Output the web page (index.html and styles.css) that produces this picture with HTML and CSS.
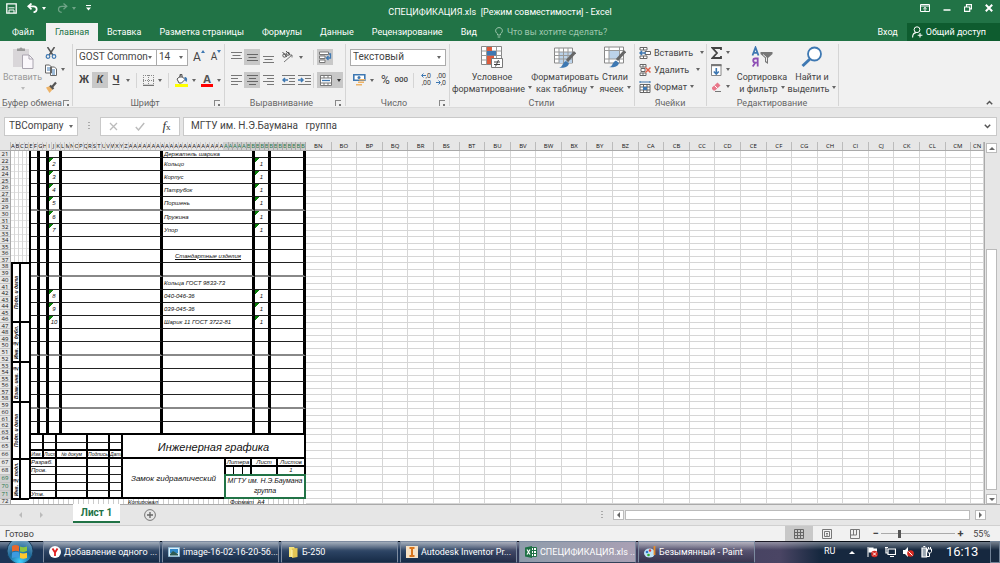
FILE: index.html
```html
<!DOCTYPE html>
<html lang="ru">
<head>
<meta charset="utf-8">
<title>СПЕЦИФИКАЦИЯ.xls [Режим совместимости] - Excel</title>
<link rel="stylesheet" href="styles.css">
</head>
<body>
<header class="titlebar">
  <div class="quick">
    <button class="tb" aria-label="Сохранить"><svg width="11" height="11" viewBox="0 0 11 11"><path d="M.8.8h9.400v9.400H.8z" fill="none" stroke="#fff" stroke-width="1.300"/><path d="M2.500 4.800h6M3 10V7h5v3" fill="none" stroke="#fff"/></svg></button>
    <button class="tb undo" aria-label="Отменить"><svg width="11" height="10" viewBox="0 0 11 10"><path d="M4.500.5 1.200 3.300l3.300 3M1.500 3.300h4.800c4.400 0 4.600 5.500.2 6" fill="none" stroke="#fff" stroke-width="1.700"/></svg><i class="car w"></i></button>
    <button class="tb redo" aria-label="Вернуть"><svg width="11" height="10" viewBox="0 0 11 10"><path d="M6.500.5l3.300 2.800-3.300 3M9.500 3.300H5C.5 3.300.3 8.800 4.700 9.300" fill="none" stroke="#fff" stroke-width="1.300"/></svg><i class="car w"></i></button>
    <button class="tb more" aria-label="Настройка панели"><svg width="5" height="6" viewBox="0 0 5 6"><path d="M0 .5h5" stroke="#fff"/><path d="M0 2.500h5L2.500 5.500z" fill="#fff"/></svg></button>
  </div>
  <div class="doc-title">СПЕЦИФИКАЦИЯ.xls&nbsp; [Режим совместимости] - Excel</div>
  <div class="win">
    <button class="tb" aria-label="Параметры ленты"><svg width="10" height="8" viewBox="0 0 10 8"><path d="M.5.5h9v7h-9zM.5 2h9M5 7V3.500M3.300 5 5 3.400 6.700 5" fill="none" stroke="#fff"/></svg></button>
    <button class="tb" aria-label="Свернуть"><svg width="8" height="8" viewBox="0 0 8 8"><path d="M.5 6h7" stroke="#fff" stroke-width="1.500"/></svg></button>
    <button class="tb" aria-label="Восстановить"><svg width="8" height="8" viewBox="0 0 8 8"><path d="M2.500 2.500V.7h5v4.100H6M.5 3h5.200v4.300H.5z" fill="none" stroke="#fff" stroke-width="1.200"/></svg></button>
    <button class="tb" aria-label="Закрыть"><svg width="8" height="8" viewBox="0 0 8 8"><path d="m.8.8 6.400 6.400M7.200.8.800 7.200" stroke="#fff" stroke-width="2"/></svg></button>
  </div>
</header>
<nav class="tabs">
  <button class="file">Файл</button><button class="on">Главная</button><button>Вставка</button><button>Разметка страницы</button><button>Формулы</button><button>Данные</button><button>Рецензирование</button><button>Вид</button>
  <button class="tell"><svg width="8" height="11" viewBox="0 0 8 11"><path d="M2.500 8V6.800C-.8 4.500.7.6 4 .6s4.800 3.900 1.500 6.200V8zM2.700 10h2.600" fill="none" stroke="#9fc7ae"/></svg>Что вы хотите сделать?</button>
  <span class="grow"></span>
  <button class="login">Вход</button>
  <button class="share"><svg width="11" height="12" viewBox="0 0 11 12"><circle cx="5" cy="3.700" r="2.900" fill="none" stroke="#fff"/><path d="M.6 11.500c0-3 1.500-4.700 3.400-4.900M8 7v4.500M5.700 9.200h4.700" fill="none" stroke="#fff" stroke-width="1.100"/></svg>Общий доступ</button>
</nav>
<section class="ribbon">
  <div class="group clip">
    <div class="body">
      <button class="big paste off"><svg width="22" height="23" viewBox="0 0 22 23"><path d="M1 3h16v18H1z" fill="#d9d6d9"/><path d="M5 5V2.500h2.500a1.600 1.600 0 0 1 3 0H13V5z" fill="#999"/><path d="M10.500 9H17l4 4v9.500H10.500z" fill="#faf7fb" stroke="#aaa5b0"/><path d="M17 9v4h4" fill="none" stroke="#aaa5b0"/></svg><span>Вставить</span><i class="car pale"></i></button>
      <div class="stack">
        <button class="ib" aria-label="Вырезать"><svg width="12" height="12" viewBox="0 0 12 12"><path d="M2.500 0 7.800 8M9.500 0 4.200 8" stroke="#555" stroke-width="1.500"/><circle cx="3" cy="9.500" r="1.800" fill="none" stroke="#3e78b2" stroke-width="1.200"/><circle cx="9" cy="9.500" r="1.800" fill="none" stroke="#3e78b2" stroke-width="1.200"/></svg></button>
        <button class="ib" aria-label="Копировать"><svg width="12" height="12" viewBox="0 0 12 12"><path d="M.5 1h4L6.500 3v6h-6zM5.500 3h4l2 2v6.500h-6z" fill="#fff" stroke="#666"/><path d="M2 4h3M2 6h3M7 6h3M7 8h3M7 10h3" stroke="#3e78b2"/></svg><i class="car"></i></button>
        <button class="ib" aria-label="Формат по образцу"><svg width="12" height="12" viewBox="0 0 12 12"><path d="M1 6.500 5 5l3 3-3.500 4z" fill="#edb368"/><path d="m5 4.500 3.500 3.500M7.500 5.500 11 1.500" stroke="#555" stroke-width="2.200"/></svg></button>
      </div>
    </div>
    <div class="foot"><span>Буфер обмена</span><i class="launch"></i></div>
  </div>
  <div class="group font">
    <div class="body rows">
      <div class="row">
        <label class="sel fam"><select aria-label="Шрифт"><option>GOST Common</option></select></label><label class="sel size"><select aria-label="Размер"><option>14</option></select></label>
        <button class="letter up" aria-label="Увеличить размер">A<svg width="4" height="3" viewBox="0 0 4 3"><path d="m0 3 2-3 2 3z" fill="#3e78b2"/></svg></button>
        <button class="letter dn" aria-label="Уменьшить размер">A<svg width="4" height="3" viewBox="0 0 4 3"><path d="m0 0 2 3 2-3z" fill="#3e78b2"/></svg></button>
      </div>
      <div class="row">
        <button class="sq b">Ж</button><button class="sq i on">К</button><button class="sq u">Ч</button><i class="car"></i><i class="vsep"></i>
        <button class="ib" aria-label="Границы"><svg width="11" height="11" viewBox="0 0 11 11"><path d="M.5 0v10M5.500 0v10M10.500 0v10M0 .5h11M0 5.500h11" stroke="#888" stroke-dasharray="1 1"/><path d="M0 10.300h11" stroke="#555"/></svg><i class="car"></i></button><i class="vsep"></i>
        <button class="ib" aria-label="Цвет заливки"><svg width="13" height="13" viewBox="0 0 13 13"><path d="m2 5 4-3.500 4 4-3.500 3.500H4z" fill="#fff" stroke="#555"/><path d="M5 4V.5h2V4" fill="none" stroke="#555"/><path d="M9.500 3c3 0 3 2.500 2 5l-2-2z" fill="#3e78b2"/><path d="M0 10h13v3H0z" fill="#ff0"/></svg><i class="car"></i></button>
        <button class="ib" aria-label="Цвет шрифта"><span class="fc">A</span><i class="car"></i></button>
      </div>
    </div>
    <div class="foot"><span>Шрифт</span><i class="launch"></i></div>
  </div>
  <div class="group align">
    <div class="body rows">
      <div class="row">
        <button class="sq" aria-label="По верхнему краю"><svg width="11" height="11" viewBox="0 0 11 11"><path d="M0 .5h11M1.500 3.500h8M0 6.500h11" stroke="#777"/></svg></button><button class="sq on" aria-label="По середине"><svg width="11" height="11" viewBox="0 0 11 11"><path d="M0 2.500h11M1.500 5.500h8M0 8.500h11" stroke="#666"/></svg></button><button class="sq" aria-label="По нижнему краю"><svg width="11" height="11" viewBox="0 0 11 11"><path d="M0 4.500h11M1.500 7.500h8M0 10.500h11" stroke="#777"/></svg></button>
        <button class="ib ori" aria-label="Ориентация"><svg width="14" height="12" viewBox="0 0 14 12"><circle cx="3.500" cy="4.500" r="1.700" fill="none" stroke="#555"/><circle cx="7" cy="2.800" r="1.500" fill="none" stroke="#555"/><path d="m1.500 1 4.500 5M5 0l4 4" stroke="#555"/><path d="m3 11 8-7M8.500 4H11v2.500" fill="none" stroke="#777"/></svg><i class="car"></i></button><i class="vsep"></i>
        <button class="sq on" aria-label="Перенести текст"><svg width="13" height="12" viewBox="0 0 13 12"><path d="M.5 1h9v2.500h-9zM.5 5h5.500v2.500H.5zM.5 9h5.500v2.500H.5z" fill="#fff" stroke="#777"/><path d="M10 3h1.500v4H7.500M9.500 5l-2 2 2 2" fill="none" stroke="#3e78b2" stroke-width="1.300"/></svg></button>
      </div>
      <div class="row">
        <button class="sq" aria-label="Слева"><svg width="11" height="10" viewBox="0 0 11 10"><path d="M0 .5h11M0 3.500h7M0 6.500h11M0 9.500h7" stroke="#777"/></svg></button><button class="sq on" aria-label="По центру"><svg width="11" height="10" viewBox="0 0 11 10"><path d="M0 .5h11M2 3.500h7M0 6.500h11M2 9.500h7" stroke="#666"/></svg></button><button class="sq" aria-label="Справа"><svg width="11" height="10" viewBox="0 0 11 10"><path d="M0 .5h11M4 3.500h7M0 6.500h11M4 9.500h7" stroke="#777"/></svg></button>
        <button class="sq ind" aria-label="Уменьшить отступ"><svg width="13" height="10" viewBox="0 0 13 10"><path d="M0 .5h13M7 3.500h6M7 6.500h6M0 9.500h13" stroke="#777"/><path d="M6 5H1M3 3 1 5l2 2" fill="none" stroke="#3e78b2" stroke-width="1.500"/></svg></button><button class="sq" aria-label="Увеличить отступ"><svg width="13" height="10" viewBox="0 0 13 10"><path d="M0 .5h13M7 3.500h6M7 6.500h6M0 9.500h13" stroke="#777"/><path d="M0 5h5M3 3l2 2-2 2" fill="none" stroke="#3e78b2" stroke-width="1.500"/></svg></button><i class="vsep"></i>
        <button class="sq on merge" aria-label="Объединить"><svg width="12" height="11" viewBox="0 0 12 11"><path d="M.5.500h11v10H.5zM.5 3h11M.5 8h11M4 .5V3M8 .5V3M4 8v2.500M8 8v2.500" fill="#fff" stroke="#777"/><path d="M2 5.500h8" stroke="#3e78b2" stroke-width="1.300"/></svg><i class="car dark"></i></button>
      </div>
    </div>
    <div class="foot"><span>Выравнивание</span><i class="launch"></i></div>
  </div>
  <div class="group num">
    <div class="body rows">
      <div class="row"><label class="sel wide"><select aria-label="Числовой формат"><option>Текстовый</option></select></label></div>
      <div class="row">
        <button class="ib" aria-label="Денежный"><svg width="13" height="12" viewBox="0 0 13 12"><path d="M.8.800h11v5.500H.8z" fill="#fff" stroke="#3e78b2" stroke-width="1.600"/><circle cx="6" cy="3.500" r="1.500" fill="#3e78b2"/><path d="M6 5h6v1.500H6zM5 7.500h6V9H5zM3 10h6v1.500H3z" fill="#edb368"/></svg><i class="car"></i></button>
        <button class="sq pct">%</button><button class="sq ths">000</button><i class="vsep"></i>
        <button class="dec"><span><svg width="5" height="5" viewBox="0 0 5 5"><path d="M5 2.500H1M2.500.5l-2 2 2 2" fill="none" stroke="#3e78b2"/></svg>,0</span><span>,00</span></button>
        <button class="dec"><span>,00</span><span><svg width="5" height="5" viewBox="0 0 5 5"><path d="M0 2.500h4M2.500.5l2 2-2 2" fill="none" stroke="#3e78b2"/></svg>,0</span></button>
      </div>
    </div>
    <div class="foot"><span>Число</span><i class="launch"></i></div>
  </div>
  <div class="group styles">
    <div class="body">
      <button class="big c1"><svg width="22" height="23" viewBox="0 0 22 23"><path d="M.5.500h20v18H.5z" fill="#fff" stroke="#888"/><path d="M.5 5h20M.5 9.500h20M.5 14h20M5.500.5v18M15.500.5v18" stroke="#999" fill="none"/><path d="M6 1h5v4H6zM6 9.500h7V14H6zM6 14h4v4H6z" fill="#dd5b3c"/><path d="M6 5h9v4.500H6z" fill="#3e78b2"/><path d="M10.500 12.500h11v9h-11z" fill="#fff" stroke="#777"/><path d="M13 16h6M13 18.500h6M17.500 14l-3 6.500" stroke="#444"/></svg><span>Условное</span><span>форматирование<i class="car"></i></span></button>
      <button class="big c2"><svg width="22" height="23" viewBox="0 0 22 23"><path d="M.5 2h18v15H.5z" fill="#fff" stroke="#888"/><path d="M5 6h13v11H5z" fill="#bcd3ea"/><path d="M.5 6h18M.5 9.500h18M.5 13h18M5 2v15M9.500 2v15M14 2v15" stroke="#999" fill="none"/><path d="m21 6-8 9" stroke="#666" stroke-width="3"/><path d="M5 21.500c4 0 3-5 7-6.500l3 2.500c-1 4-6 5-10 4z" fill="#3e78b2"/></svg><span>Форматировать</span><span>как таблицу<i class="car"></i></span></button>
      <button class="big c3"><svg width="22" height="23" viewBox="0 0 22 23"><path d="M.5 1h19v16H.5z" fill="#fff" stroke="#888"/><path d="M5 5h11v8H5z" fill="#bcd3ea"/><path d="M.5 4.500h19M.5 13h19M5 1v16M15.500 1v16" stroke="#999" fill="none"/><path d="m21 5-8 9" stroke="#666" stroke-width="3"/><path d="M5 21c4 0 3-5 7-6.500l3 2.500c-1 4-6 5-10 4z" fill="#3e78b2"/></svg><span>Стили</span><span>ячеек<i class="car"></i></span></button>
    </div>
    <div class="foot"><span>Стили</span></div>
  </div>
  <div class="group cellsg">
    <div class="body stack3">
      <button class="line"><svg width="12" height="12" viewBox="0 0 12 12"><path d="M1 .5h7v2.500H1zM1 9h7v2.500H1zM4.500.5V3M4.500 9v2.500M6 4.500h5.500v3H6z" fill="#fff" stroke="#666"/><path d="M7 6H1M3 4 1 6l2 2" fill="none" stroke="#3e78b2" stroke-width="1.500"/></svg><span>Вставить</span><i class="car far"></i></button>
      <button class="line"><svg width="12" height="12" viewBox="0 0 12 12"><path d="M1 .5h6v2.500H1zM1 9h6v2.500H1zM4 .5V3M4 9v2.500M2 4.500h4v3H2z" fill="#fff" stroke="#666"/><path d="m6.500 3.500 5 5M11.500 3.500l-5 5" stroke="#e0604a" stroke-width="1.500"/></svg><span>Удалить</span><i class="car far"></i></button>
      <button class="line"><svg width="12" height="12" viewBox="0 0 12 12"><path d="M1 3.500h10v8H1zM1 6h10M1 9h10M4.500 3.500v8M8 3.500v8" fill="#fff" stroke="#666"/><path d="M4 6h4v3H4z" fill="#3e78b2"/><path d="M1 1h10M1 0v2M11 0v2" stroke="#3e78b2"/></svg><span>Формат</span><i class="car"></i></button>
    </div>
    <div class="foot"><span>Ячейки</span></div>
  </div>
  <div class="group edit">
    <div class="body">
      <div class="stack3 short">
        <button class="ib" aria-label="Сумма"><svg width="11" height="12" viewBox="0 0 11 12"><path d="M10 3V1H1.500L6 6l-4.500 5H10V9" fill="none" stroke="#444" stroke-width="1.800"/></svg><i class="car"></i></button>
        <button class="ib" aria-label="Заполнить"><svg width="11" height="12" viewBox="0 0 11 12"><path d="M.5.500h9.500v11H.5z" fill="#fff" stroke="#888"/><path d="M0 1.200h10.500" stroke="#777" stroke-width="2"/><path d="M5.300 4v6M2.800 7.500 5.300 10l2.500-2.500" fill="none" stroke="#3e78b2" stroke-width="1.600"/></svg><i class="car"></i></button>
        <button class="ib" aria-label="Очистить"><svg width="11" height="12" viewBox="0 0 11 12"><path d="m1 6.500 5.500-5 3 3-5.500 5H2.500L1 8z" fill="#e8788a"/><path d="m3.500 4.500 3 3" stroke="#fff"/><path d="M4 10.500h6" stroke="#777"/></svg><i class="car"></i></button>
      </div>
      <button class="big e1"><svg width="22" height="23" viewBox="0 0 22 23"><g fill="none" stroke-width="1.800"><path d="m1.500 9.500 3-8 3 8M2.500 6.800h4" stroke="#3e78b2"/><path d="M6.700 20.500v-8H4.300c-2.800 0-2.800 4.200 0 4.200h2.400M4.300 16.700l-2.600 3.800" stroke="#8e4fb5"/></g><path d="M9.500 6h12v2l-4.500 4v6l-3-2v-4L9.500 8z" fill="#777"/><path d="m12 8.500 3.500 3v4" fill="none" stroke="#eee"/></svg><span>Сортировка</span><span>и фильтр<i class="car"></i></span></button>
      <button class="big e2"><svg width="22" height="23" viewBox="0 0 22 23"><circle cx="13.500" cy="8" r="6.500" fill="#fff" stroke="#3e78b2" stroke-width="1.800"/><path d="m9 13-7.500 7" stroke="#3e78b2" stroke-width="3"/></svg><span>Найти и</span><span>выделить<i class="car"></i></span></button>
    </div>
    <div class="foot"><span>Редактирование</span></div>
  </div>
  <button class="collapse" aria-label="Свернуть ленту"><svg width="7" height="5" viewBox="0 0 7 5"><path d="M.8 4.200 3.500 1.500l2.700 2.700" fill="none" stroke="#555" stroke-width="1.500"/></svg></button>
</section>
<section class="formula">
  <div class="namebox"><input value="TBCompany" aria-label="Имя"><i class="car"></i></div>
  <i class="dots"></i>
  <div class="fx"><button aria-label="Отмена"><svg width="9" height="9" viewBox="0 0 9 9"><path d="m1 1 7 7M8 1 1 8" stroke="#bbb" stroke-width="1.300"/></svg></button><button aria-label="Ввод"><svg width="10" height="9" viewBox="0 0 10 9"><path d="m.8 5 2.700 3L9.200 1" fill="none" stroke="#bbb" stroke-width="1.400"/></svg></button><button class="f"><i>f</i>x</button></div>
  <div class="fbar"><input value="МГТУ им. Н.Э.Баумана&nbsp;&nbsp; группа" aria-label="Строка формул"><svg width="7" height="5" viewBox="0 0 7 5"><path d="M.8.800 3.500 3.500 6.200.8" fill="none" stroke="#555" stroke-width="1.500"/></svg></div>
</section>
<main class="book">
  <div class="sheet">
    <div class="colhead"><span class="corner"></span><div class="narrow" id="narrow"></div><div class="wide-cols" id="wide"></div></div>
    <div class="grid">
      <div class="rowhead" id="rows"></div>
      <div class="drawing">
        <div class="edge">
          <div class="blank"></div>
          <div class="stamps">
            <div class="st s1"><span>Подп. и дата</span></div><div class="st s2"><span>Инв. № дубл.</span></div><div class="st s2"><span>Взам. инв. №</span></div><div class="st s3"><span>Подп. и дата</span></div><div class="st s2"><span>Инв. № подл.</span></div>
          </div>
        </div>
        <div class="form">
          <table class="spec"><colgroup><col class="k9"><col class="k9"><col class="k13"><col class="k101"><col class="k92"><col class="k16"><col></colgroup><tbody id="spec"></tbody></table>
          <div class="block">
            <table class="sign"><colgroup><col class="k13"><col class="k13"><col class="k31"><col class="k22"><col></colgroup>
              <tr><td></td><td></td><td></td><td></td><td></td></tr>
              <tr class="thick"><td></td><td></td><td></td><td></td><td></td></tr>
              <tr class="thick mid"><td>Изм.</td><td>Лист</td><td>№ докум</td><td>Подпись</td><td>Дата</td></tr>
              <tr><td colspan="2">Разраб.</td><td></td><td></td><td></td></tr>
              <tr><td colspan="2">Пров.</td><td></td><td></td><td></td></tr>
              <tr><td colspan="2"></td><td></td><td></td><td></td></tr>
              <tr><td colspan="2"></td><td></td><td></td><td></td></tr>
              <tr class="thick"><td colspan="2">Утв.</td><td></td><td></td><td></td></tr>
            </table>
            <div class="titles">
              <div class="subject">Инженерная графика</div>
              <div class="lower">
                <div class="part">Замок гидравлический</div>
                <div class="org">
                  <div class="lit"><span>Литера</span><span>Лист</span><span>Листов</span></div>
                  <div class="lit vals"><span class="tri"><i></i><i></i><i></i></span><span></span><span>1</span></div>
                  <div class="picked">МГТУ им. Н.Э.Баумана<br>группа</div>
                </div>
              </div>
            </div>
          </div>
          <div class="below"><span class="cp">Копировал</span><span>Формат&nbsp; А4</span></div>
        </div>
      </div>
      <div class="cells" id="cells"></div>
    </div>
  </div>
  <div class="vscroll"><button aria-label="Вверх"><i class="tu"></i></button><i class="track"></i><i class="thumb"></i><i class="gap"></i><button aria-label="Вниз"><i class="td"></i></button></div>
</main>
<section class="sheetbar">
  <button class="nav" aria-label="Назад"><i class="tl pale"></i></button><button class="nav" aria-label="Вперёд"><i class="tr pale"></i></button>
  <button class="sheettab">Лист 1</button>
  <button class="add" aria-label="Новый лист"><svg width="12" height="12" viewBox="0 0 12 12"><circle cx="6" cy="6" r="5.400" fill="none" stroke="#777"/><path d="M6 3v6M3 6h6" stroke="#666" stroke-width="1.300"/></svg></button>
  <span class="grow"></span><i class="dots"></i>
  <div class="hscroll"><button aria-label="Влево"><i class="tl"></i></button><i class="hthumb"></i><button aria-label="Вправо"><i class="tr"></i></button></div>
</section>
<footer class="status">
  <span>Готово</span><span class="grow"></span>
  <button class="view on" aria-label="Обычный"><svg width="10" height="10" viewBox="0 0 10 10"><path d="M.5.500h9v9h-9zM3.500.5v9M6.500.5v9M.5 3.500h9M.5 6.500h9" fill="none" stroke="#666"/></svg></button>
  <button class="view" aria-label="Разметка"><svg width="10" height="10" viewBox="0 0 10 10"><path d="M.5.500h9v9h-9zM2.500 2.500h5v5h-5zM4 4.500h2M4 6h2" fill="none" stroke="#777"/></svg></button>
  <button class="view" aria-label="Страничный"><svg width="10" height="10" viewBox="0 0 10 10"><path d="M.5.500h9v9h-9zM.5 6h6V.5M3.500.5V6" fill="none" stroke="#777"/></svg></button>
  <button class="zb">−</button><input class="zoom" type="range" min="0" max="100" value="24" aria-label="Масштаб"><button class="zb">+</button><span class="pc">55%</span>
</footer>
<div class="taskbar">
  <button class="orb" aria-label="Пуск"><svg width="28" height="22" viewBox="0 0 28 22"><defs><radialGradient id="o" cx=".5" cy=".9" r=".9"><stop offset="0" stop-color="#3fd0ff"/><stop offset=".5" stop-color="#1c6a9c"/><stop offset="1" stop-color="#7fa9c4"/></radialGradient></defs><circle cx="14" cy="10" r="13" fill="url(#o)" stroke="#1b3c5b"/><path d="M6 5c3-1.500 5-1 7 0v5.500c-2-1-4-1-7 0z" fill="#e8682c"/><path d="M14 5.500c2 1 4.500 1 7 0V10c-3 1.200-5 1-7 .500z" fill="#8cc63f"/><path d="M6 11.500c3-1 5-1 7 0V17c-2-1-4-1-7 0z" fill="#3d9be0"/><path d="M14 11.800c2 .8 4.500.8 7 0V17c-2.500 1-5 1-7 0z" fill="#ffc72e"/></svg></button>
  <button class="task"><svg width="12" height="12" viewBox="0 0 12 12"><circle cx="6" cy="6" r="6" fill="#fff"/><path d="m3.500 2.500 2.500 4 2.500-4M6 6v4" fill="none" stroke="#e02020" stroke-width="1.800"/></svg><span>Добавление одного ...</span></button>
  <button class="task"><svg width="12" height="12" viewBox="0 0 12 12"><path d="M.5 1.500h11v9H.5z" fill="#d9eefb" stroke="#8fb7d0"/><path d="M2 3h8v4H2z" fill="#3088c8"/><path d="m2 8 3-3 5 3v1.500H2z" fill="#2d5a52"/></svg><span>image-16-02-16-20-56...</span></button>
  <button class="task"><svg width="12" height="12" viewBox="0 0 12 12"><path d="M2 1h5l1 1.500V11H2z" fill="#f5e27a"/><path d="M5 2.500 10.500 2v9L5 12z" fill="#e3c554"/><path d="M5 4v7" stroke="#fff6b8"/></svg><span>Б-250</span></button>
  <button class="task"><svg width="12" height="12" viewBox="0 0 12 12"><path d="M0 0h12v12H0z" fill="#f8e2c4"/><path d="M3.500 2h5M6 2v8M3.500 10h5" stroke="#d9751c" stroke-width="2"/></svg><span>Autodesk Inventor Pr...</span></button>
  <button class="task act"><svg width="12" height="12" viewBox="0 0 12 12"><path d="M6 1.500h5.500v9H6z" fill="#fff" stroke="#1e7145"/><path d="M8.500 2v8M7 4.500h4M7 7.500h4" stroke="#1e7145"/><path d="M0 1.500 7 0v12L0 10.500z" fill="#1e7145"/><path d="m2 3.500 3 5M5 3.500l-3 5" stroke="#fff" stroke-width="1.200"/></svg><span>СПЕЦИФИКАЦИЯ.xls ...</span></button>
  <button class="task"><svg width="12" height="12" viewBox="0 0 12 12"><ellipse cx="5.500" cy="7" rx="5.500" ry="4.500" fill="#bfe4f7"/><circle cx="3" cy="6" r="1.300" fill="#2d76c9"/><circle cx="6" cy="4.500" r="1.200" fill="#d33"/><circle cx="4.500" cy="9" r="1.300" fill="#3a3"/><path d="M10.500 0v9" stroke="#e58b2a" stroke-width="1.800"/></svg><span>Безымянный - Paint</span></button>
  <span class="grow"></span>
  <span class="lang">RU</span>
  <div class="tray"><i class="tu white"></i>
    <svg width="11" height="12" viewBox="0 0 11 12"><path d="M1 1v10" stroke="#fff"/><path d="M1.500 1.500h5v1h3.500v5H6v-1H1.500z" fill="#fff"/><circle cx="7.500" cy="8" r="3.300" fill="#d82a22"/><path d="m6 6.500 3 3M9 6.500l-3 3" stroke="#fff"/></svg>
    <svg width="11" height="12" viewBox="0 0 11 12"><path d="M3 3h7.500v5.500H3zM5 10.500h4M1 1v6h2M0 1.500h3" fill="none" stroke="#fff" stroke-width="1.200"/></svg>
    <svg width="11" height="12" viewBox="0 0 11 12"><path d="M0 4h2l3-3v10L2 8H0z" fill="#fff"/><circle cx="7.500" cy="7.500" r="3.300" fill="#d82a22"/><path d="m5.500 5.500 4 4" stroke="#fff"/></svg>
    <svg width="11" height="12" viewBox="0 0 11 12"><path d="M1 2h4.500v9H1zM2.300.5h2" fill="#9aa6b2" stroke="#fff" stroke-width="1.200"/><path d="M6.500 3h4v2.500c0 2-4 2-4 0zM8.500 7v3.500H6M7.500 1v2M9.500 1v2" fill="none" stroke="#fff"/></svg>
  </div>
  <span class="clock">16:13</span><button class="desk" aria-label="Рабочий стол"></button>
</div>
<script src="app.js"></script>
</body>
</html>
```
FILE: styles.css
```css
* { box-sizing: border-box; }
body { margin: 0; height: 100vh; display: flex; flex-direction: column; overflow: hidden; background: #e6e6e6; color: #444; font: 9px/12px Roboto, "Noto Sans", sans-serif; }
button, input, select { font: inherit; color: inherit; border: 0; padding: 0; margin: 0; background: none; border-radius: 0; outline: 0; }
svg { display: block; flex: none; }
i { flex: none; }
.grow { flex: 1; }

.car { display: inline-block; border: solid transparent; border-width: 3px 2px 0; border-top-color: #666; }
.car.w { border-top-color: #fff; }
.car.pale { border-top-color: #bbb; }
.car.dark { border-top-color: #333; }
.car.far { margin-left: 4px; }

.titlebar { display: flex; justify-content: space-between; height: 23px; background: #217346; color: #fff; flex: none; }
.quick, .win { display: flex; align-items: center; height: 16px; width: 110px; }
.quick { padding-left: 6px; }
.tb { display: flex; align-items: center; gap: 4px; }
.undo { margin-left: 10px; }
.redo { margin-left: 11px; opacity: .35; }
.more { margin-left: 10px; }
.doc-title { padding-top: 6px; white-space: nowrap; }
.win { justify-content: flex-end; gap: 13px; padding-right: 7px; }

.tabs { display: flex; height: 18px; background: #217346; color: #fff; flex: none; white-space: nowrap; }
.tabs button { padding: 0 9px; }
.tabs .file { width: 46px; padding: 0; }
.tabs .on { width: 52px; padding: 0; background: #f1f1f1; color: #217346; }
.tabs .tell { display: flex; align-items: center; gap: 4px; color: #9fc7ae; }
.tabs .share { display: flex; align-items: center; gap: 3px; background: #0e5c2f; padding: 0 14px 0 5px; }

.ribbon { display: flex; height: 67px; padding-top: 3px; background: #f1f1f1; border-bottom: 1px solid #dadada; flex: none; position: relative; white-space: nowrap; }
.group { display: flex; flex-direction: column; height: 62px; border-right: 1px solid #d5d5d5; flex: none; }
.body { display: flex; height: 53px; flex: none; }
.foot { display: flex; align-items: center; height: 12px; padding: 0 4px 0 3px; color: #666; flex: none; }
.foot span { flex: 1; text-align: center; }
.launch { width: 6px; height: 6px; border: solid #888; border-width: 1px 0 0 1px; background: linear-gradient(#777, #777) 3px 3px / 3px 3px no-repeat; }
.clip { width: 73px; }
.clip .foot { padding: 0 3px 0 1px; }
.font { width: 152px; }
.align { width: 121px; }
.num { width: 104px; }
.styles { width: 185px; }
.cellsg { width: 72px; }
.edit { width: 132px; }
.big { display: flex; flex-direction: column; align-items: center; padding-top: 2px; }
.big svg { margin-bottom: 2px; }
.big span { display: block; }
.big .car { margin: 0 0 3px 3px; }
.paste { width: 45px; color: #999; }
.big.paste > .car { margin: 4px 0 0; }
.stack, .stack3 { display: flex; flex-direction: column; gap: 4px; padding-top: 2px; }
.ib, .line { display: flex; align-items: center; gap: 4px; height: 13px; }
.rows { flex-direction: column; gap: 7px; padding: 5px 0 0 3px; }
.row { display: flex; align-items: center; height: 16px; }
.sel { display: flex; position: relative; height: 17px; border: 1px solid #ababab; background: #fff; font-size: 10px; }
.sel::after { content: ""; position: absolute; right: 4px; top: 6px; border: solid transparent; border-width: 3px 2px 0; border-top-color: #666; pointer-events: none; }
.sel select { appearance: none; width: 100%; padding: 0 2px; }
.fam { width: 81px; }
.size { width: 32px; margin-left: -1px; }
.wide { width: 96px; margin-left: 1px; }
.letter { display: flex; align-items: flex-start; font-size: 12px; line-height: 14px; margin-left: 5px; }
.letter.dn { font-size: 10px; margin-left: 6px; }
.sq { display: flex; align-items: center; justify-content: center; width: 16px; height: 16px; font-size: 10px; }
.sq.on { background: #c8c8c8; }
.b { font-weight: 700; }
.i { font-weight: 700; font-style: italic; }
.u { font-weight: 700; text-decoration: underline; }
.vsep { width: 1px; height: 15px; background: #d5d5d5; margin: 0 6px; }
.font .row > .car { margin-left: 2px; }
.font .row .ib + .ib { margin-left: 5px; }
.fc { width: 12px; height: 14px; border-bottom: 3px solid red; font: 700 11px/11px "Open Sans", sans-serif; text-align: center; color: #555; }
.ori { margin-left: 5px; width: 20px; }
.ori + .vsep { margin: 0 3px 0 12px; }
.ind { margin-left: 4px; }
.ind + .sq + .vsep { margin: 0 3px 0 1px; }
.align .merge { width: 26px; gap: 5px; }
.num .ib { margin-left: 4px; }
.pct { font-size: 12px; margin-left: 4px; }
.ths { font-size: 8px; font-weight: 500; width: 18px; }
.num .vsep { margin: 0 5px 0 3px; }
.dec { display: flex; flex-direction: column; align-items: flex-end; width: 13px; font-size: 7px; line-height: 7px; margin-right: 3px; }
.dec span { display: flex; }
.c1 { width: 84px; }
.c2 { width: 62px; }
.c3 { width: 38px; }
.stack3 { padding-left: 4px; }
.cellsg .line { gap: 3px; }
.short { width: 28px; }
.e1 { width: 54px; }
.e2 { width: 46px; }
.collapse { position: absolute; right: 7px; bottom: 2px; }

.formula { display: flex; align-items: center; height: 34px; padding: 2px 3px 0 4px; flex: none; font-size: 10px; }
.namebox, .fx, .fbar { display: flex; align-items: center; height: 19px; border: 1px solid #c9c9c9; background: #fff; }
.namebox { width: 74px; padding: 0 4px; }
.namebox input { flex: 1; min-width: 0; }
.dots { width: 2px; height: 9px; margin: 0 10px; background: repeating-linear-gradient(#aaa 0 1px, transparent 1px 3px); }
.fx { width: 80px; justify-content: space-around; margin-right: 3px; }
.fx .f { font: 9px/12px "Liberation Serif", serif; color: #333; }
.fx .f i { font-size: 13px; }
.fbar { flex: 1; padding: 0 5px 0 7px; }
.fbar input { flex: 1; min-width: 0; }

.book { display: flex; flex: 1; min-height: 0; overflow: hidden; }
.sheet { flex: 1; min-width: 0; display: flex; flex-direction: column; border-right: 1px solid #aaa; }
.colhead { display: flex; height: 9px; flex: none; border-bottom: 1px solid #aaa; font: 6px/8px "Open Sans", sans-serif; color: #111; }
.corner { width: 11px; flex: none; border-right: 1px solid #bbb; }
.narrow { display: flex; width: 295px; flex: none; }
.narrow span { flex: 1 1 0; min-width: 0; overflow: hidden; text-align: center; border-right: 1px solid #ccc; }
.narrow .hl { background: #cfcfcf; color: #217346; border-color: #aaa; }
.wide-cols, .cells { display: grid; flex: 1; min-width: 0; overflow: hidden; grid-template-columns: repeat(26, 2fr) 1fr; }
.wide-cols span { text-align: center; overflow: hidden; border-right: 1px solid #bbb; }
.grid { display: flex; flex: 1; min-height: 0; overflow: hidden; background: #fff; }
.rowhead { display: grid; align-content: start; width: 11px; flex: none; background: #e6e6e6; border-right: 1px solid #aaa; font: 6px/6px "Open Sans", sans-serif; color: #111; text-align: center; }
.rowhead span { border-bottom: 1px solid #c4c4c4; }
.rowhead .hl { background: #cfcfcf; color: #217346; }
.rowhead span:last-child { border: 0; line-height: 5px; }
.cells { align-content: start; }
.cells i { border: solid #d6d6d6; border-width: 0 1px 1px 0; }

.drawing { display: flex; width: 295px; flex: none; color: #111; font: italic 6px/7px "Liberation Sans", sans-serif; }
.edge { width: 18px; flex: none; }
.blank { height: 111px; background: repeating-linear-gradient(90deg, transparent 0 3px, #d6d6d6 3px 4px), repeating-linear-gradient(transparent 0 6px, #e2e2e2 6px 7px); }
.stamps { border-top: 2px solid #000; border-left: 2px solid #000; }
.st { display: flex; height: 40px; border-bottom: 2px solid #000; }
.s1 { height: 59px; }
.s3 { height: 57px; }
.st span { width: 8px; border-left: 2px solid #000; writing-mode: vertical-rl; transform: rotate(180deg); text-align: center; line-height: 6px; font-weight: 700; white-space: nowrap; font-size: 5px; }
.form { flex: 1; min-width: 0; }
table { border-collapse: separate; border-spacing: 0; table-layout: fixed; }
td { padding: 0; overflow: hidden; white-space: nowrap; }
.spec { width: 277px; border-left: 2px solid #000; }
.spec td { height: 13px; border-bottom: 1px solid #222; border-right: 3px solid #000; line-height: 11px; }
.spec tr.first td { height: 7px; line-height: 6px; }
.spec tr.tall td { height: 14px; border-bottom: 2px solid #888; }
.spec tr.last td { border-bottom: 2px solid #000; }
.spec td:nth-child(3), .spec td:nth-child(6) { text-align: center; }
.spec td:nth-child(5) { padding-left: 1px; }
.spec .flag { background: linear-gradient(135deg, #0a7d0a 3px, transparent 3px) no-repeat; }
.spec .head { text-align: center; text-decoration: underline; }
.k9 { width: 9px; }
.k13 { width: 13px; }
.k16 { width: 16px; }
.k22 { width: 22px; }
.k31 { width: 31px; }
.k92 { width: 92px; }
.k101 { width: 101px; }
.block { display: flex; height: 64px; }
.sign { width: 94px; border-left: 2px solid #000; flex: none; }
.sign td { height: 8px; line-height: 7px; border-right: 2px solid #000; border-bottom: 1px solid #222; }
.sign .thick td { border-bottom: 2px solid #000; line-height: 6px; }
.sign .mid td { text-align: center; font-size: 5px; }
.titles { flex: 1; min-width: 0; display: flex; flex-direction: column; }
.subject { height: 24px; line-height: 24px; text-align: center; font-size: 11px; border-right: 2px solid #000; border-bottom: 2px solid #000; }
.lower { display: flex; flex: 1; min-height: 0; }
.part { width: 101px; display: flex; align-items: center; justify-content: center; font-size: 8px; border-bottom: 2px solid #000; white-space: nowrap; }
.org { flex: 1; display: flex; flex-direction: column; }
.lit { display: flex; height: 8px; border-bottom: 2px solid #000; border-left: 2px solid #000; line-height: 6px; text-align: center; flex: none; }
.lit > span { width: 26px; border-right: 2px solid #000; }
.lit > span:last-child { flex: 1; }
.vals { border-bottom: 0; height: 7px; }
.tri { display: flex; }
.tri i { flex: 1; border-right: 1px solid #000; }
.tri i:last-child { border: 0; }
.picked { flex: 1; border: 2px solid #217346; text-align: center; font-size: 7px; line-height: 10px; white-space: nowrap; }
.below { display: flex; height: 6px; padding-left: 99px; line-height: 6px; background: repeating-linear-gradient(90deg, transparent 0 4px, #ccc 4px 5px); }
.cp { width: 102px; }

.vscroll { width: 13px; display: flex; flex-direction: column; flex: none; margin: 0 1px; padding-top: 1px; }
.vscroll button, .hscroll button { display: flex; align-items: center; justify-content: center; width: 11px; height: 10px; background: #fff; border: 1px solid #bbb; flex: none; }
.track { flex: 97 1 0; }
.thumb { flex: 242 1 0; width: 11px; background: #fff; border: 1px solid #bbb; }
.gap { height: 4px; }
.tu, .td, .tl, .tr { border: 3px solid transparent; }
.tu { border-width: 0 3px 3px; border-bottom-color: #666; }
.td { border-width: 3px 3px 0; border-top-color: #666; }
.tl { border-width: 3px 3px 3px 0; border-right-color: #666; }
.tr { border-width: 3px 0 3px 3px; border-left-color: #666; }
.tl.pale { border-right-color: #bbb; }
.tr.pale { border-left-color: #bbb; }
.tu.white { border-bottom-color: #fff; }

.sheetbar { display: flex; align-items: center; height: 21px; flex: none; border-top: 1px solid #aaa; padding: 0 14px 0 19px; }
.nav { width: 21px; display: flex; }
.sheettab { align-self: flex-start; width: 47px; height: 19px; margin: -1px 0 0 12px; background: #fff; border-bottom: 2px solid #217346; color: #217346; font-weight: 700; font-size: 10px; }
.add { margin-left: 24px; }
.hscroll { display: flex; width: 373px; gap: 1px; }
.hthumb { flex: 1; background: #fff; border: 1px solid #bbb; margin-right: 4px; }

.status { display: flex; align-items: center; height: 16px; flex: none; background: #f1f1f1; border-top: 1px solid #d0d0d0; padding: 0 10px 0 5px; }
.view { width: 28px; height: 15px; display: flex; align-items: center; justify-content: center; }
.view.on { background: #c8c8c8; }
.view + .zb { margin-left: 1px; }
.zb { width: 11px; font-weight: 700; font-size: 11px; }
.zoom { appearance: none; width: 74px; height: 10px; background: linear-gradient(#aaa, #aaa) center / 100% 1px no-repeat; }
.zoom::-webkit-slider-thumb { appearance: none; width: 3px; height: 8px; background: #555; }
.pc { width: 24px; text-align: right; }

.taskbar { display: flex; align-items: stretch; height: 22px; flex: none; background: linear-gradient(#0009 0 1px, #fff6 1px, #fff0 9px), linear-gradient(90deg, #1c3557 0 45%, #3b3a5a 55%, #4a4564 78%, #16283f 82%); color: #fff; gap: 2px; }
.orb { width: 41px; padding-left: 6px; }
.task { display: flex; align-items: center; gap: 3px; flex: 0 1 117px; min-width: 0; padding: 0 1px 0 5px; border: 1px solid #7d8ba0; border-bottom-color: #33425a; border-radius: 1px; background: linear-gradient(#ffffff50, #ffffff10 50%, #00000030); white-space: nowrap; overflow: hidden; }
.act { background: linear-gradient(90deg, #8f9cab, #a9a0b4); }
.lang { width: 14px; margin-right: 9px; padding-top: 4px; font-size: 9px; }
.tray { display: flex; align-items: center; gap: 7px; }
.tray .tu { margin-right: 5px; }
.clock { width: 54px; padding-left: 12px; line-height: 22px; font-size: 13px; flex: none; }
.desk { width: 10px; border: 1px solid #6f8094; }
```
FILE: app.js
```js
const el = (tag, cls, text) => {
  const n = document.createElement(tag);
  if (cls) n.className = cls;
  if (text !== undefined) n.textContent = text;
  return n;
};
const colName = n => (n < 26 ? '' : String.fromCharCode(64 + Math.floor(n / 26))) + String.fromCharCode(65 + n % 26);

const narrow = document.getElementById('narrow');
for (let c = 0; c < 65; c++) narrow.append(el('span', c > 46 ? 'hl' : '', colName(c)[0]));
const wide = document.getElementById('wide');
for (let c = 65; c < 92; c++) wide.append(el('span', '', colName(c)));

const spec = [
  ['', 'Держатель шарика', ''], ['2', 'Кольцо', '1'], ['3', 'Корпус', '1'], ['4', 'Патрубок', '1'],
  ['5', 'Поршень', '1'], ['6', 'Пружина', '1'], ['7', 'Упор', '1'], ['', '', ''],
  ['', 'Стандартные изделия', ''], ['', '', ''], ['', 'Кольца ГОСТ 9833-73', ''],
  ['8', '040-046-36', '1'], ['9', '039-045-36', '1'], ['10', 'Шарик 11 ГОСТ 3722-81', '1'],
  ['', '', ''], ['', '', ''], ['', '', ''], ['', '', ''], ['', '', ''], ['', '', ''], ['', '', ''], ['', '', '']
];
const tallRows = [4, 9, 15, 19];
const heights = [7];
const body = document.getElementById('spec');
spec.forEach(([pos, name, qty], i) => {
  const tall = tallRows.includes(i);
  if (i) heights.push(7, tall ? 7 : 6);
  const tr = el('tr', i === 0 ? 'first' : i === spec.length - 1 ? 'last' : tall ? 'tall' : '');
  ['', '', pos, '', name, qty, ''].forEach((t, k) => {
    const flag = (k === 2 || k === 5) && t;
    tr.append(el('td', flag ? 'flag' : k === 4 && name.startsWith('Станд') ? 'head' : '', t));
  });
  body.append(tr);
});
heights.push(8, 8, 8, 8, 8, 8, 8, 8, 5);
const tracks = heights.map(h => h + 'px').join(' ');
const rows = document.getElementById('rows');
const cells = document.getElementById('cells');
rows.style.gridTemplateRows = tracks;
cells.style.gridTemplateRows = tracks;
heights.forEach((h, i) => {
  rows.append(el('span', i > 47 && i < 51 ? 'hl' : '', 21 + i));
  for (let c = 0; c < 27; c++) cells.append(el('i'));
});
```
